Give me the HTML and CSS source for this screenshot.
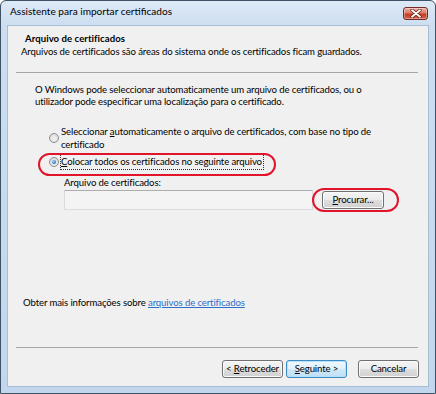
FILE: index.html
```html
<!DOCTYPE html>
<html lang="pt">
<head>
<meta charset="utf-8">
<title>Assistente para importar certificados</title>
<link rel="stylesheet" href="styles.css">
</head>
<body>
<div class="window">
  <div class="titlebar">
    <span class="title">Assistente para importar certificados</span>
    <span class="close">
      <svg width="14" height="9" viewBox="0 0 14 9">
        <path d="M3 1.2 L11 7.8 M11 1.2 L3 7.8" stroke="#5a1a12" stroke-width="3.2" stroke-linecap="round"/>
        <path d="M3 1.2 L11 7.8 M11 1.2 L3 7.8" stroke="#ffffff" stroke-width="1.8" stroke-linecap="round"/>
      </svg>
    </span>
  </div>
  <div class="client">
    <div class="header">
      <div class="h-title">Arquivo de certificados</div>
      <div class="h-desc">Arquivos de certificados são áreas do sistema onde os certificados ficam guardados.</div>
    </div>
    <div class="sep"></div>
    <div class="content">
      <p class="intro">O Windows pode seleccionar automaticamente um arquivo de certificados, ou o<br>utilizador pode especificar uma localização para o certificado.</p>
      <div class="opt opt-auto">
        <span class="radio"></span>
        <span class="opt-text">Seleccionar <u>a</u>utomaticamente o arquivo de certificados, com base no tipo de<br>certificado</span>
      </div>
      <div class="opt opt-place">
        <span class="radio checked"></span>
        <span class="opt-text focus"><u>C</u>olocar todos os certificados no seguinte arquivo</span>
      </div>
      <div class="file-label">Arquivo de certificados:</div>
      <div class="file-row">
        <div class="textbox"></div>
        <div class="btn btn-browse"><span><u>P</u>rocurar...</span></div>
      </div>
      <div class="more">Obter mais informações sobre <span class="link">arquivos de certificados</span></div>
    </div>
    <div class="sep"></div>
    <div class="footer">
      <div class="btn"><span>&lt; <u>R</u>etroceder</span></div>
      <div class="btn btn-default"><span><u>S</u>eguinte &gt;</span></div>
      <div class="btn btn-cancel"><span>Cancelar</span></div>
    </div>
    <div class="mark mark-option"></div>
    <div class="mark mark-browse"></div>
  </div>
</div>
</body>
</html>
```
FILE: styles.css
```css
* { box-sizing: border-box; }
html, body { margin: 0; padding: 0; }
body {
  width: 436px;
  height: 394px;
  overflow: hidden;
  background: #ffffff;
  font-family: "Lato", "Open Sans", sans-serif;
  font-size: 9.6px;
  letter-spacing: -0.12px;
  color: #000000;
}
.window {
  width: 436px;
  height: 394px;
  display: flex;
  flex-direction: column;
  border: 1px solid #3e5266;
  border-radius: 6px 6px 0 0;
  background: linear-gradient(#dde9f6 0px, #cddef1 24px, #c2d6ed 100%);
  padding: 0 6px 6px 6px;
}
.titlebar {
  height: 24px;
  flex: none;
  display: flex;
  align-items: center;
  justify-content: space-between;
  padding: 0 1px 4px 3px;
}
.title {
  font-size: 10.1px;
  letter-spacing: 0;
  color: #000;
}
.close {
  width: 25px;
  height: 13px;
  display: flex;
  align-items: center;
  justify-content: center;
  border: 1px solid #6e2e25;
  border-radius: 3px;
  background: linear-gradient(#edb0a2 0%, #de7b66 45%, #c73b22 55%, #d6644b 100%);
  box-shadow: inset 0 0 0 1px rgba(255,255,255,0.35);
  margin-top: 4px;
}
.close svg { display: block; }
.client {
  position: relative;
  flex: 1;
  display: flex;
  flex-direction: column;
  background: #f0f0f0;
  border: 1px solid #a8bdd6;
}
.header {
  padding: 6px 0 14px 13px;
  line-height: 13px;
}
.h-title {
  font-weight: bold;
  letter-spacing: 0.05px;
  padding-left: 4px;
}
.sep {
  height: 1px;
  background: #a5a5a5;
  margin: 0 10px 0 8px;
  flex: none;
}
.content {
  flex: 1;
  display: flex;
  flex-direction: column;
  padding: 11px 0 38px 0;
}
.intro {
  margin: 0 0 0 27px;
  line-height: 12px;
}
.opt {
  display: flex;
  align-items: center;
  margin-left: 41px;
  line-height: 13px;
}
.opt-auto { margin-top: 17px; }
.opt-place { margin-top: 4px; }
.radio {
  width: 10px;
  height: 10px;
  flex: none;
  border-radius: 50%;
  border: 1px solid #8c8e90;
  background: radial-gradient(circle at 50% 60%, #f6f6f6 0%, #e2e2e2 55%, #cfcfcf 100%);
  margin-right: 2px;
  position: relative;
}
.radio.checked::after {
  content: "";
  position: absolute;
  left: 2px;
  top: 2px;
  width: 4px;
  height: 4px;
  border-radius: 50%;
  background: radial-gradient(circle at 40% 35%, #a9d8f8 0%, #2f7fcf 60%, #1c5596 100%);
}
.opt-text.focus {
  outline: 1px dotted #333;
  outline-offset: 0;
  padding: 0 1px 1px 0;
}
.file-label {
  margin: 7px 0 0 56px;
  line-height: 13px;
}
.file-row {
  display: flex;
  align-items: center;
  margin: 0 0 0 56px;
  height: 21px;
}
.textbox {
  width: 249px;
  height: 20px;
  border: 1px solid #dcdcdc;
  border-top-color: #adadad;
  background: #f4f4f4;
}
.btn {
  width: 61px;
  height: 18px;
  display: flex;
  align-items: center;
  justify-content: center;
  border: 1px solid #707070;
  border-radius: 3px;
  background: linear-gradient(#f4f4f4 0%, #ececec 48%, #dedede 52%, #d0d0d0 100%);
  box-shadow: inset 0 0 0 1px #fbfbfb;
  line-height: 12px;
  white-space: pre;
}
.btn-browse {
  width: 62px;
  margin-left: 9px;
}
.more {
  margin: auto 0 0 15px;
  line-height: 13px;
}
.link {
  color: #2e6ec8;
  text-decoration: underline;
}
.footer {
  display: flex;
  justify-content: flex-end;
  gap: 3px;
  padding: 12px 9px 8px 0;
}
.btn-default {
  border-color: #3c8cc4;
  background: linear-gradient(#eef7fd 0%, #e2f1fb 48%, #cfe8f8 52%, #bfdff4 100%);
  box-shadow: inset 0 0 0 1px #b8e2fb;
}
.btn-cancel { margin-left: 8px; }
.mark {
  position: absolute;
  border: 2px solid #e2142c;
  border-radius: 12px;
}
.mark-option {
  left: 30px;
  top: 127px;
  width: 238px;
  height: 23px;
}
.mark-browse {
  left: 304px;
  top: 162px;
  width: 87px;
  height: 24px;
}
```
